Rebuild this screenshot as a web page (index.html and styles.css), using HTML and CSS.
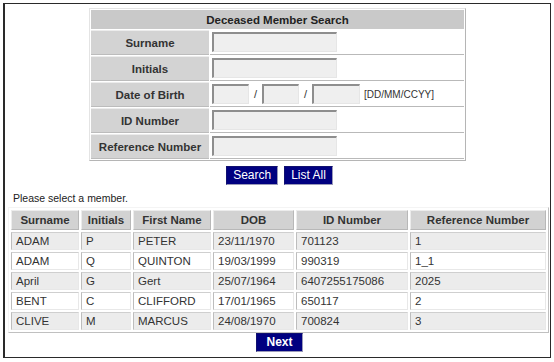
FILE: index.html
```html
<!DOCTYPE html>
<html>
<head>
<meta charset="utf-8">
<link rel="stylesheet" href="styles.css">
</head>
<body>
<div class="frame">
  <table class="search">
    <tr><th colspan="2" class="title">Deceased Member Search</th></tr>
    <tr><th class="lbl">Surname</th><td class="val"><span class="inp w125"></span></td></tr>
    <tr><th class="lbl">Initials</th><td class="val"><span class="inp w125"></span></td></tr>
    <tr><th class="lbl">Date of Birth</th><td class="val"><div class="dob"><span class="inp w37"></span><span class="sep">/</span><span class="inp w37"></span><span class="sep">/</span><span class="inp w48"></span><span class="fmt">[DD/MM/CCYY]</span></div></td></tr>
    <tr><th class="lbl">ID Number</th><td class="val"><span class="inp w125"></span></td></tr>
    <tr><th class="lbl">Reference Number</th><td class="val"><span class="inp w125"></span></td></tr>
  </table>
  <div class="btns"><span class="btn">Search</span><span class="btn">List All</span></div>
  <p class="hint">Please select a member.</p>
  <table class="results">
    <colgroup><col class="c1"><col class="c2"><col class="c3"><col class="c4"><col class="c5"><col class="c6"></colgroup>
    <tr><th>Surname</th><th>Initials</th><th>First Name</th><th>DOB</th><th>ID Number</th><th>Reference Number</th></tr>
    <tr class="odd"><td>ADAM</td><td>P</td><td>PETER</td><td>23/11/1970</td><td>701123</td><td>1</td></tr>
    <tr><td>ADAM</td><td>Q</td><td>QUINTON</td><td>19/03/1999</td><td>990319</td><td>1_1</td></tr>
    <tr class="odd"><td>April</td><td>G</td><td>Gert</td><td>25/07/1964</td><td>6407255175086</td><td>2025</td></tr>
    <tr><td>BENT</td><td>C</td><td>CLIFFORD</td><td>17/01/1965</td><td>650117</td><td>2</td></tr>
    <tr class="odd"><td>CLIVE</td><td>M</td><td>MARCUS</td><td>24/08/1970</td><td>700824</td><td>3</td></tr>
  </table>
  <div class="btns next"><span class="btn bold">Next</span></div>
</div>
</body>
</html>
```
FILE: styles.css
```css
* { box-sizing: border-box; }
html, body { margin: 0; padding: 0; background: #fff; }
body { font-family: "Liberation Sans", Arial, sans-serif; color: #222; }
.frame {
  margin: 3px;
  width: 548px;
  height: 355px;
  border: 1px solid #2a2a2a;
  border-left-width: 2px;
  padding-top: 4px;
}
.search {
  margin: 0 auto;
  width: 377px;
  border-collapse: separate;
  border-spacing: 1px;
  border: 1px solid #b5b5b5;
  border-left-color: #e4e4e4;
  border-top-color: #e4e4e4;
}
.search th, .search td { padding: 0; }
.title {
  height: 19px;
  background: #c9c9c9;
  font-size: 11.5px;
  font-weight: bold;
  color: #222;
  text-align: center;
}
.lbl {
  width: 118px;
  height: 25px;
  background: #d3d3d3;
  border-top: 1px solid #ececec;
  border-bottom: 1px solid #bcbcbc;
  font-size: 11.5px;
  font-weight: bold;
  color: #333;
  text-align: center;
}
.val {
  border-bottom: 1px solid #b9b9b9;
  padding-left: 2px !important;
  vertical-align: middle;
}
.inp {
  display: inline-block;
  vertical-align: middle;
  height: 20px;
  background: #efefef;
  border-top: 2px solid #8e8e8e;
  border-left: 2px solid #8e8e8e;
  border-right: 1px solid #e6e6e6;
  border-bottom: 1px solid #e6e6e6;
}
.w125 { width: 125px; }
.w37 { width: 37px; }
.w48 { width: 48px; }
.dob { display: flex; align-items: center; }
.sep { width: 13px; text-align: center; font-size: 11px; color: #333; }
.fmt { margin-left: 4px; font-size: 10px; color: #333; }
.btns {
  display: flex;
  justify-content: center;
  gap: 6px;
  margin-top: 5px;
  padding-left: 4px;
}
.btn {
  display: inline-block;
  height: 19px;
  line-height: 17px;
  padding: 0 6px;
  background: #000080;
  color: #fff;
  font-size: 12px;
  border: 1px solid #101070;
  border-right-color: #9a9ab8;
  border-bottom-color: #9a9ab8;
}
.btn.bold { font-weight: bold; padding: 0 9px; }
.hint {
  margin: 7px 0 0 8px;
  font-size: 10.5px;
  color: #222;
  height: 14px;
}
.results {
  margin: 1px 0 0 3px;
  table-layout: fixed;
  border-collapse: separate;
  border-spacing: 2px;
  border: 1px solid #c0c0c0;
  border-top-color: #f4f4f4;
  border-left-color: #f4f4f4;
}
.c1 { width: 68px; } .c2 { width: 50px; } .c3 { width: 78px; }
.c4 { width: 81px; } .c5 { width: 112px; } .c6 { width: 136px; }
.results th {
  height: 20px;
  padding: 0;
  background: #d2d2d2;
  border: 1px solid #ececec;
  border-right-color: #b8b8b8;
  border-bottom-color: #b8b8b8;
  font-size: 11.5px;
  font-weight: bold;
  color: #333;
  text-align: center;
}
.results td {
  height: 18px;
  padding: 0 0 0 4px;
  font-size: 11.5px;
  color: #333;
  background: #fff;
  border: 1px solid #e8e8e8;
  border-left-color: #bdbdbd;
  border-top-color: #cfcfcf;
  white-space: nowrap;
}
.results tr.odd td { background: #ececec; }
.next { margin-top: 0; }
```
